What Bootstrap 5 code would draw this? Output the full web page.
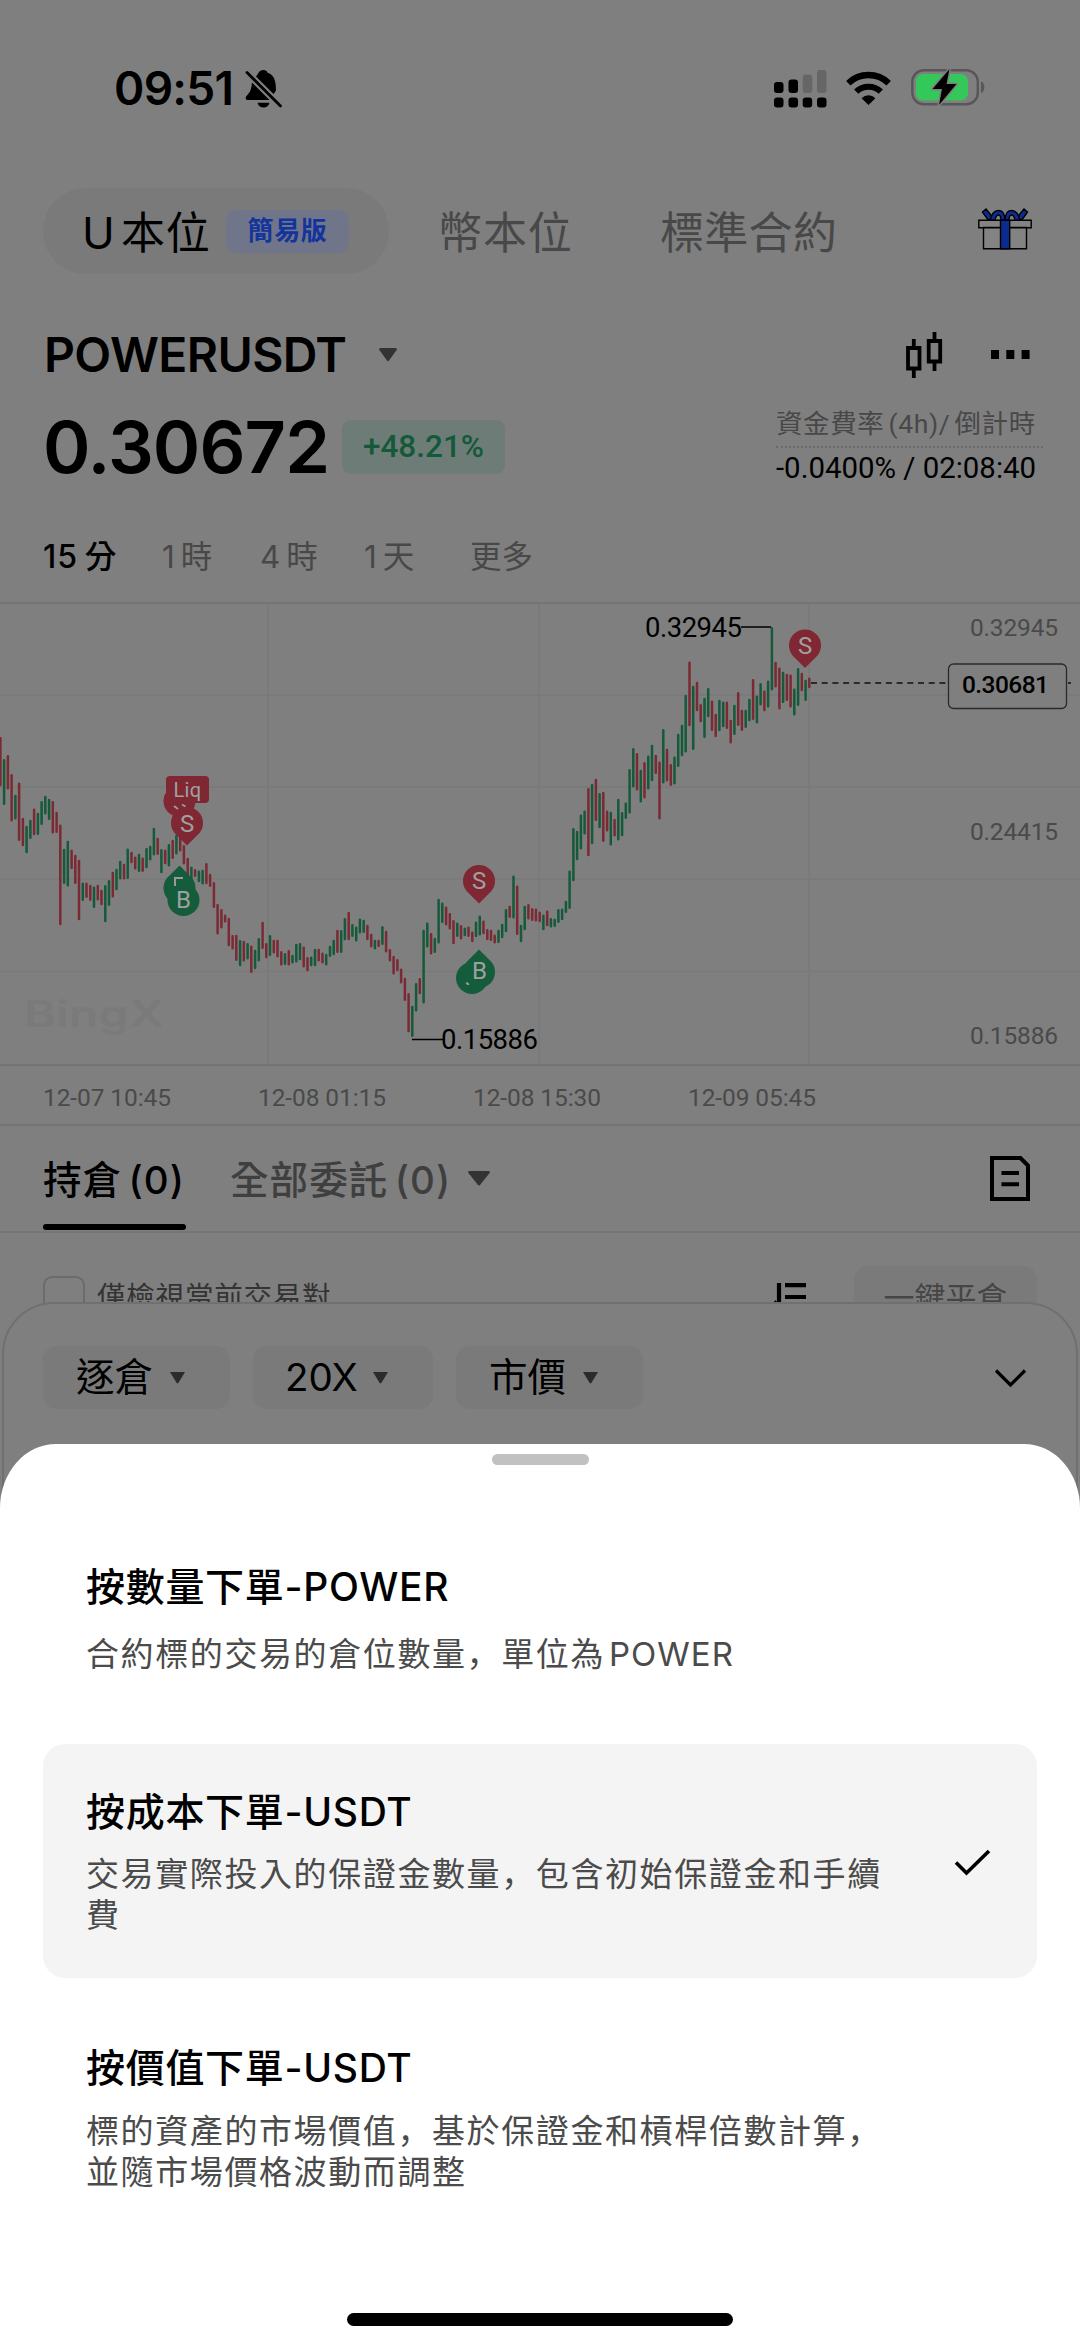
<!DOCTYPE html>
<html lang="zh-Hant">
<head>
<meta charset="utf-8">
<meta name="viewport" content="width=device-width, initial-scale=1">
<title>POWERUSDT</title>
<link href="https://cdn.jsdelivr.net/npm/bootstrap@5.3.0/dist/css/bootstrap.min.css" rel="stylesheet">
<style>
body{width:1080px;height:2348px;overflow:hidden;background:#7f7f7f;color:#000;font-family:Inter,"Noto Sans CJK TC",sans-serif;line-height:1}
.app{height:2348px;padding:0}
.rb{font-family:Roboto,"Noto Sans CJK TC",sans-serif}
.px43{padding-left:43px;padding-right:43px}
.dim{color:#484848}
svg{display:block;flex:none}
.status{height:178px;padding:0 95px 0 114px}
.clock{font-size:46px;font-weight:600;letter-spacing:-.7px;width:131px;padding-bottom:3px}
.kinds{height:106px}
.pill{height:86px;width:346px;border-radius:43px;background:#7a7a7a;padding-left:39px}
.kind{font-size:44px;letter-spacing:.9px;word-spacing:-8px;white-space:nowrap;padding-top:3px}
.easy{width:123px;height:43px;border-radius:9px;background:#717589;color:#12349c;font-size:26px;font-weight:700;letter-spacing:.6px}
.sym-row{height:61px;margin-top:40px}
.sym{font-size:48px;font-weight:600;letter-spacing:-.6px;width:335px;margin-left:1px;white-space:nowrap}
.price-row{height:123px}
.price{font-size:72px;font-weight:600;letter-spacing:-.9px;width:299px;white-space:nowrap}
.chg{width:163px;height:54px;border-radius:9px;background:#6e7c77;color:#14593a;font-size:31.500px;font-weight:500}
.fund{width:267px;margin-right:-6px}
.fund-t{font-size:26.500px;letter-spacing:.6px;word-spacing:-3px;border-bottom:2px dotted #6a6a6a;height:38px;padding-top:1px;white-space:nowrap}
.fund-v{font-size:29.400px;padding-top:6px;white-space:nowrap}
.frames{height:94px;padding-top:4px;font-size:31.5px;word-spacing:-3px}
.frames span{white-space:nowrap}
.w1{width:119px;font-size:32px;letter-spacing:1px}.w2{width:98px}.w3{width:104px}.w4{width:106px}
.orders{height:107px;font-size:38.500px;letter-spacing:1.100px;word-spacing:-5px;white-space:nowrap}
.orders .on{width:143px;height:107px;padding-top:3px}
.orders .on::after{content:"";position:absolute;left:0;right:0;bottom:2px;height:6px;border-radius:3px;background:#000}
.rule{border-bottom:2px solid #767676}
.filter{height:128px}
.boxy{width:42px;height:42px;border:2px solid #6b6b6b;border-radius:9px}
.closeall{width:183px;height:62px;border-radius:14px;background:#7a7a7a;font-size:31px;color:#454545}
.panel{position:absolute;left:2px;top:1302px;width:1076px;height:200px;background:#7f7f7f;border:2px solid #707070;border-radius:52px 52px 0 0;padding:42px 40px 0 39px}
.chip{height:63px;border-radius:14px;background:#7a7a7a;font-size:38.500px}
.sheet{position:absolute;left:0;top:1444px;width:1080px;height:904px;background:#fff;border-radius:56px 56px 0 0 / 64px 64px 0 0;padding:10px 43px 0}
.grab{width:97px;height:11px;border-radius:6px;background:#c1c1c1}
.opt{border-radius:22px;padding:0 43px}
.opt-t{font-size:39px;font-weight:500;line-height:44px;letter-spacing:.7px}
.opt-d{font-size:33px;line-height:41px;letter-spacing:1.6px;color:#4b4b4b;white-space:nowrap}
.comma{font-family:"Noto Sans CJK SC",sans-serif;line-height:1}
.o1{height:221px;margin-top:58px;padding-top:42px}
.o2{height:234px;background:#f4f4f4;padding-top:46px}
.o3{height:240px;padding-top:68px}
.home{position:absolute;left:347px;bottom:22px;width:386px;height:13px;border-radius:7px;background:#000}
</style>
<script src="https://cdn.jsdelivr.net/npm/bootstrap@5.3.0/dist/js/bootstrap.bundle.min.js"></script>
</head>
<body>
<div class="app d-flex flex-column position-relative overflow-hidden">
  <header class="status d-flex align-items-center">
    <span class="clock">09:51</span>
    <svg width="37" height="40" viewBox="0 0 37 40"><path d="M18.500 1c-2.700 0-4.600 1.400-5.200 3.200L31 21.600C30.700 17 31.500 6.500 22.500 3.800 22 2 20.500 1 18.500 1zM7 13.500 24.500 31H3c-2.500 0-3-2.500-1.500-4C5.500 23 6.300 20 7 13.500zM13.300 4.200 7 13.500 24.500 31 31 21.600z" fill="#000"/><path d="M2 3.500 35.500 37" stroke="#7f7f7f" stroke-width="7"/><path d="M2 3.500 35.500 37" stroke="#000" stroke-width="2.800" stroke-linecap="round"/><path d="M12.500 33.800h12c-.6 3-3 4.800-6 4.800s-5.400-1.800-6-4.800z" fill="#000"/></svg>
    <svg class="ms-auto" width="53" height="38" viewBox="0 0 53 38"><g fill="#000"><rect x="0" y="27.500" width="9.500" height="10" rx="3"/><rect x="14.500" y="27.500" width="9.500" height="10" rx="3"/><rect x="28.700" y="27.500" width="9.500" height="10" rx="3"/><rect x="43" y="27.500" width="9.500" height="10" rx="3"/><rect x="0" y="12" width="9.500" height="11" rx="3"/><rect x="14.500" y="9.500" width="9.500" height="13.500" rx="3"/></g><g fill="#666"><rect x="28.700" y="4.500" width="9.500" height="18.500" rx="3"/><rect x="43" y="0" width="9.500" height="23" rx="3"/></g></svg>
    <svg style="margin-left:19px;margin-bottom:3px" width="45" height="34" viewBox="0 0 45 34"><g fill="none" stroke="#000"><path d="M2.300 12.200a29 29 0 0 1 40.400 0" stroke-width="6.300"/><path d="M10.200 20.700a17.500 17.500 0 0 1 24.600 0" stroke-width="6"/></g><path d="M22.500 34 15.600 27.200a9.800 9.800 0 0 1 13.800 0z" fill="#000"/></svg>
    <svg style="margin-left:20px;margin-bottom:4px" width="74" height="38" viewBox="0 0 74 38"><rect x="1.300" y="2.300" width="65.500" height="34" rx="11.500" fill="none" stroke="#59565a" stroke-width="2.400"/><rect x="5" y="6" width="52" height="26.500" rx="7" fill="#34c759"/><path d="M70 13.500c4.500 1.500 4.500 10 0 11.500z" fill="#59565a"/><path d="M38.500 1 21.500 21H31l-3 16L45.500 16H35.500z" fill="#000" stroke="#7f7f7f" stroke-width="3" paint-order="stroke" stroke-linejoin="round"/></svg>
  </header>

  <nav class="kinds d-flex align-items-center px43">
    <div class="pill d-flex align-items-center"><span class="kind" style="width:144px">U 本位</span><span class="easy d-flex align-items-center justify-content-center">簡易版</span></div>
    <span class="kind dim" style="margin-left:49px;width:222px">幣本位</span>
    <span class="kind dim" style="letter-spacing:.3px">標準合約</span>
    <svg class="ms-auto" style="margin-right:5px;margin-bottom:4px" width="54" height="42" viewBox="0 0 54 42"><g stroke="#000" stroke-width="1.400"><g fill="#0b2c8e"><path d="M4.500 4 8 1l6.500 8-4 3.500zM49.500 4 46 1l-6.500 8 4 3.500z"/><path d="M12.500 12.500C13 6 16.500 2.500 20.500 2.500c4 0 6.500 3 6.500 10h-4c0-3.500-.5-5.500-2.500-5.500s-3 2-3.500 5.500zM41.500 12.500C41 6 37.500 2.500 33.500 2.500c-4 0-6.500 3-6.500 10h4c0-3.500.5-5.500 2.500-5.500s3 2 3.500 5.500z"/></g><path d="M5.500 19.500h43v21.300h-43zM.800 12.200h52.400v7.500H.800z" fill="#838383"/><path d="M22.500 12.200h9.200v28.600h-9.200z" fill="#0b2c8e"/></g></svg>
  </nav>

  <div class="sym-row d-flex align-items-center px43">
    <span class="sym">POWERUSDT</span>
    <svg width="18" height="14" viewBox="0 0 18 14"><path d="M0 1.500Q0 0 1.500 0h15Q18 0 18 1.500L10 12.500q-1 1.300-2 0z" fill="#333"/></svg>
    <svg class="ms-auto" width="37" height="46" viewBox="0 0 37 46"><path d="M2 16h11.500v20.500H2zM22.700 9H34.200v20.500H22.700zM7.800 7v9M7.800 36.500V46M28.500 0v9M28.500 29.500v9.500" fill="none" stroke="#000" stroke-width="3.800"/></svg>
    <svg style="margin:0 7px 0 48px" width="39" height="9" viewBox="0 0 39 9"><path d="M0 0h8v9H0zM15.300 0h8v9h-8zM30.600 0h8v9h-8z"/></svg>
  </div>

  <div class="price-row d-flex align-items-center px43">
    <span class="price">0.30672</span>
    <span class="chg rb d-flex align-items-center justify-content-center">+48.21%</span>
    <div class="fund ms-auto rb">
      <div class="fund-t dim">資金費率 (4h)/ 倒計時</div>
      <div class="fund-v">-0.0400% / 02:08:40</div>
    </div>
  </div>

  <div class="frames d-flex align-items-center px43 dim">
    <span class="w1 text-black fw-medium">15 分</span><span class="w2">1 時</span><span class="w3">4 時</span><span class="w4">1 天</span><span>更多</span>
  </div>

  <svg id="chart" width="1080" height="524" viewBox="0 602 1080 524" font-family="Roboto, sans-serif">
    <g stroke="#7a7a7a" stroke-width="1.500"><path d="M0 695H1080M0 787H1080M0 879H1080M0 971.500H1080M268 604V1065M539 604V1065M809 604V1065"/></g>
    <path d="M0 603H1080M0 1065H1080M0 1125H1080" stroke="#747474" stroke-width="2"/>
    <text x="24" y="1027" font-family="Inter, sans-serif" font-weight="600" font-size="37" fill="#7a7a7a" textLength="140" lengthAdjust="spacingAndGlyphs">BingX</text>
    <path id="up" stroke="#145a3b" stroke-width="2.500" stroke-linecap="round"/>
    <path id="down" stroke="#7b2a34" stroke-width="2.500" stroke-linecap="round"/>
    <g fill="#7f2833">
      <circle cx="179.500" cy="801" r="16"/>
      <path d="M166 780q0-4 4-4h35q4 0 4 4v19q0 4-4 4h-35q-4 0-4-4z"/>
      <path d="M187 845.500l-12.500-12.500a16 16 0 1 1 25 0z"/>
      <path d="M479 903.500l-12.500-12.500a16 16 0 1 1 25 0z"/>
      <path d="M805 668l-12.500-12.500a16 16 0 1 1 25 0z"/>
    </g>
    <g fill="#155c3c">
      <path d="M179.500 865.500l12.500 12.500a16 16 0 1 1-25 0z"/><circle cx="183.500" cy="900" r="16"/>
      <circle cx="472" cy="978" r="16"/><path d="M479 949.500l12.500 12.500a16 16 0 1 1-25 0z"/>
    </g>
    <path d="M175 886v-8h8M174 806l4 3M182 804.500l3.500 2M466.500 982.500q1 2 2.500 1.500" fill="none" stroke="#9a9a9a" stroke-width="2"/>
    <g fill="#a0a0a0" text-anchor="middle" font-size="24"><text x="187" y="831.500">S</text><text x="479" y="889">S</text><text x="805" y="653.500">S</text><text x="183.500" y="907.500">B</text><text x="479.500" y="979">B</text><text x="187.500" y="797" font-size="20" letter-spacing=".4">Liq</text></g>
    <path d="M741 627h30M412 1039.500h31" stroke="#000" stroke-width="1.600"/>
    <path d="M811 683H946M1068 683h3" stroke="#111" stroke-width="1.600" stroke-dasharray="6 4.700"/>
    <rect x="948.500" y="664" width="118" height="44.500" rx="5" fill="#7f7f7f" stroke="#2a2a2a" stroke-width="1.300"/>
    <g font-size="27.500"><text x="645" y="636.500" textLength="97">0.32945</text><text x="441" y="1048.500" textLength="97">0.15886</text></g>
    <g font-size="24.500" fill="#4a4a4a"><text x="970" y="635.700" textLength="88">0.32945</text><text x="970" y="839.700" textLength="88">0.24415</text><text x="970" y="1043.700" textLength="88">0.15886</text>
    <text x="962" y="693.200" textLength="87" font-weight="500" fill="#000">0.30681</text>
    <text x="43" y="1105.500" textLength="128">12-07 10:45</text><text x="258" y="1105.500" textLength="128">12-08 01:15</text><text x="473" y="1105.500" textLength="128">12-08 15:30</text><text x="688" y="1105.500" textLength="128">12-09 05:45</text></g>
  </svg>

  <div class="orders d-flex align-items-center px43 rule">
    <span class="on position-relative d-flex align-items-center fw-medium">持倉 (0)</span>
    <span class="fw-medium" style="margin-left:44px;padding-top:3px;width:238px;color:#3f3f3f">全部委託 (0)</span>
    <svg width="22" height="15" viewBox="0 0 22 15"><path d="M0 1.500Q0 0 1.500 0h19Q22 0 22 1.500L12 14q-1 1-2 0z" fill="#333"/></svg>
    <svg class="ms-auto" style="margin-right:7px" width="40" height="45" viewBox="0 0 40 45"><path d="M2 2h28.500L38 9.500V43H2zM11.500 17h17.500M11.500 28.300h17.500" fill="none" stroke="#000" stroke-width="4"/></svg>
  </div>
  <div class="filter d-flex align-items-center px43">
    <span class="boxy"></span><span style="margin-left:12px;font-size:28.500px;letter-spacing:.8px;color:#333">僅檢視當前交易對</span>
    <svg class="ms-auto" width="32" height="28" viewBox="0 0 32 28"><path d="M5 0v26M0 18.500l5 6M11 2.200h21M11 14h21M11 25.500h21" fill="none" stroke="#000" stroke-width="4.200"/></svg>
    <span class="closeall d-flex align-items-center justify-content-center" style="margin-left:48px">一鍵平倉</span>
  </div>

  <section class="panel d-flex align-items-start">
    <div class="chip d-flex align-items-center" style="width:187px;padding-left:33px"><span style="width:94px">逐倉</span><svg width="15" height="12" viewBox="0 0 15 12"><path d="M0 0h15L8.500 10.800q-1 1-2 0z" fill="#2b2b2b"/></svg></div>
    <div class="chip d-flex align-items-center" style="width:180px;padding-left:32px;margin-left:23px"><span style="width:88px">20X</span><svg width="15" height="12" viewBox="0 0 15 12"><path d="M0 0h15L8.500 10.800q-1 1-2 0z" fill="#2b2b2b"/></svg></div>
    <div class="chip d-flex align-items-center" style="width:187px;padding-left:33px;margin-left:23px"><span style="width:94px">市價</span><svg width="15" height="12" viewBox="0 0 15 12"><path d="M0 0h15L8.500 10.800q-1 1-2 0z" fill="#2b2b2b"/></svg></div>
    <svg class="ms-auto" style="margin:22px 9px 0 0" width="33" height="20" viewBox="0 0 33 20"><path d="M2 2.500 16.500 17 31 2.500" fill="none" stroke="#000" stroke-width="3.200"/></svg>
  </section>

  <section class="sheet">
    <div class="grab mx-auto"></div>
    <div class="opt o1"><div class="opt-t">按數量下單-POWER</div><div class="opt-d" style="margin-top:25px">合約標的交易的倉位數量<span class="comma" lang="zh-Hans">，</span>單位為<span style="margin-left:4px;letter-spacing:1px">POWER</span></div></div>
    <div class="opt o2 d-flex justify-content-between">
      <div><div class="opt-t">按成本下單-USDT</div><div class="opt-d" style="margin-top:20px">交易實際投入的保證金數量<span class="comma" lang="zh-Hans">，</span>包含初始保證金和手續<br>費</div></div>
      <svg style="margin:59px 3px 0 0" width="37" height="27" viewBox="0 0 37 27"><path d="M2 13.500 12.500 24 35 2" fill="none" stroke="#000" stroke-width="3.600"/></svg>
    </div>
    <div class="opt o3"><div class="opt-t">按價值下單-USDT</div><div class="opt-d" style="margin-top:21px">標的資產的市場價值<span class="comma" lang="zh-Hans">，</span>基於保證金和槓桿倍數計算<span class="comma" lang="zh-Hans">，</span><br>並隨市場價格波動而調整</div></div>
    <div class="home"></div>
  </section>
</div>
<script>
/* Each bar: direction (r = down, g = up), high and low in thirds of a pixel below y = 600. */
const bars="r412-558 g478-614 r466-568 r523-664 g585-658 r548-722 r654-738 g678-759 g660-716 r626-705 g639-704 g604-674 g588-643 g597-659 r604-700 r636-698 r674-975 g747-851 g723-859 r749-807 r765-851 r780-960 g848-902 r848-893 r855-902 g860-923 r855-901 r870-915 g856-966 g841-917 r816-892 g807-870 g783-838 r792-838 g746-836 r756-789 r770-808 g762-815 r773-815 g745-804 g738-781 g684-766 r714-764 g748-819 r749-792 g733-799 r720-776 g705-763 r700-754 r736-793 r774-830 g800-840 r808-830 g812-846 g810-853 r790-852 r822-860 r847-923 r912-1003 r928-985 r944-967 r954-1038 r1006-1048 r1005-1082 g1021-1098 r1023-1084 g1030-1078 r1037-1118 g1050-1107 g1015-1084 r966-1046 r1030-1074 g1006-1067 r1020-1060 r1020-1072 r1054-1096 g1060-1094 r1051-1096 g1065-1090 g1032-1087 g1030-1080 r1040-1102 r1072-1113 g1070-1098 g1047-1098 r1047-1084 r1058-1090 g1062-1096 g1038-1070 g1020-1065 r990-1058 g991-1058 g955-1020 r936-1020 g973-1010 g980-1024 g956-1000 g960-998 r975-1020 r1002-1042 g1020-1048 r1020-1040 g979-1034 r993-1057 r1048-1084 r1068-1123 r1078-1113 r1106-1150 r1134-1202 r1180-1296 g1218-1310 g1150-1234 r1135-1182 g990-1210 g968-1042 r1000-1063 g1014-1058 g897-1030 g908-968 r920-976 r940-988 r961-1032 g968-1010 r976-1018 g983-1008 r980-1010 r995-1026 g965-1011 g947-1006 r962-1002 r988-1020 r990-1022 r1004-1030 g990-1028 g972-1014 g928-996 r918-953 g827-955 r857-1004 g975-1026 g918-990 r913-958 r925-962 r926-964 r935-966 g944-990 r932-978 g955-982 g957-980 g928-968 g926-960 g903-938 g812-926 g685-843 g693-780 g644-748 g632-703 r565-768 g552-732 r537-662 g580-684 r576-725 r632-694 g636-736 r657-709 g597-721 g637-708 g608-656 g508-640 g445-562 r460-571 g510-607 r487-595 g467-568 g435-543 r465-521 r485-658 g388-550 r447-544 r493-557 g470-553 g402-500 g375-468 g285-457 r185-378 g258-449 r246-333 r313-366 g294-413 g265-351 r302-392 r342-411 g300-393 g305-381 r305-386 r360-430 g315-404 r277-377 r330-392 g330-383 g297-363 r238-359 g287-370 g250-316 r272-333 g242-322 g82-271 r186-262 r203-328 g216-308 r222-302 r224-322 g266-346 g205-317 r219-273 g240-302 r233-264".split(" ");
const d={r:"",g:""};
bars.forEach((b,i)=>{const [h,l]=b.slice(1).split("-").map(Number),x=(.4+i*3.745).toFixed(1);d[b[0]]+=`M${x} ${(601+h/3).toFixed(1)}V${(599+l/3).toFixed(1)}`});
document.getElementById("up").setAttribute("d",d.g);
document.getElementById("down").setAttribute("d",d.r);
</script>
</body>
</html>
